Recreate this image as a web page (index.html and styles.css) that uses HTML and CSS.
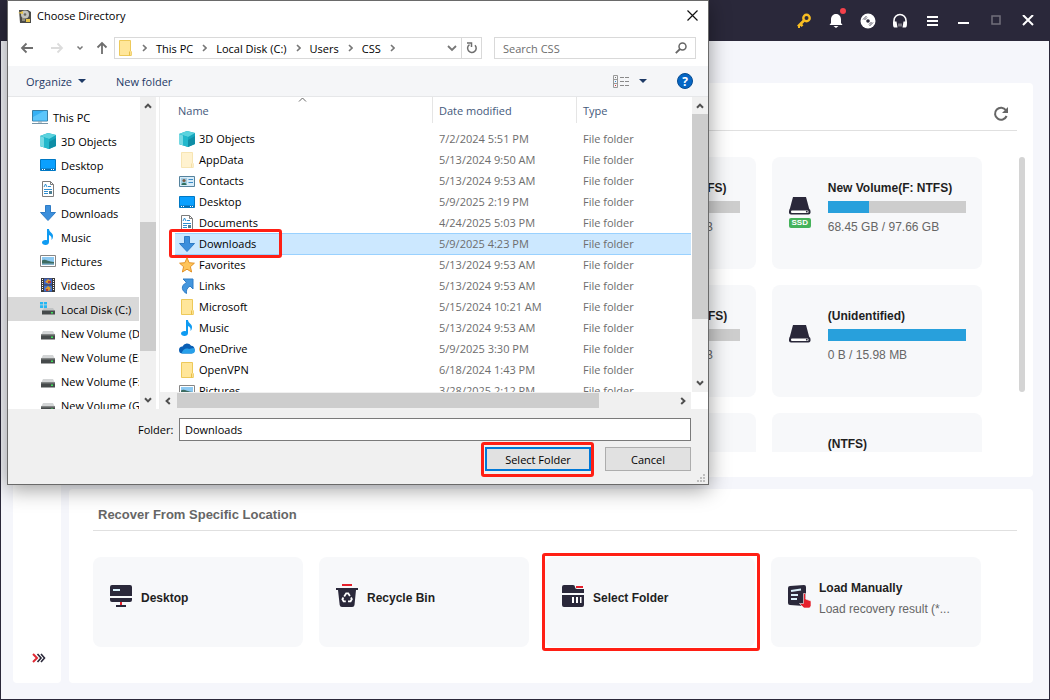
FILE: index.html
```html
<!DOCTYPE html>
<html lang="en">
  <head>
    <meta charset="UTF-8" />
    <meta name="viewport" content="width=device-width, initial-scale=1.0" />
    <title>Data Recovery</title>
    <link rel="stylesheet" href="styles.css">
  </head>
  <body>
    <!-- shared icons -->
    <svg class="sprite" aria-hidden="true">
      <symbol id="i-chevron" viewBox="0 0 5 8"><path d="M1 1l3 3-3 3" fill="none" stroke="#777" stroke-width="1.6"/></symbol>
      <symbol id="i-arrow" viewBox="0 0 8 8"><path d="M1 5.8L4 2.600l3 3.200" fill="none" stroke="#505050" stroke-width="2"/></symbol>
      <symbol id="i-pc" viewBox="0 0 16 16"><path d="M.5 1.500h15v10.500h-15z" fill="#35b1f5" stroke="#3b7fa5"/><path d="M1 8L12 2h3v9.500H1z" fill="#5cc6fb"/><path d="M6 12.500h4v1H6z" fill="#8aa2b1"/><path d="M0 14h16v1H0z" fill="#7593a6"/></symbol>
      <symbol id="i-3d" viewBox="0 0 16 16"><path d="M0 3l8-3 8 2v11l-7 3-9-3z" fill="#17a6bd"/><path d="M0 3l8-3 8 2-7 4z" fill="#5bd3de"/><path d="M0 3l9 3v10l-9-3z" fill="#22b8cc"/><path d="M0 3l4 1.500v10L0 13z" fill="#75d9e3"/><path d="M9 9l7-4v8l-7 3z" fill="#0f8ea6"/></symbol>
      <symbol id="i-desktop" viewBox="0 0 16 16"><path d="M.5 2.500h15v11H.5z" fill="#0aa0ff" stroke="#0078c4"/><path d="M1 11.500h14v1.500H1z" fill="#0b6cae"/><path d="M2 12h1v1H2zM4 12h1v1H4zM11 12h1v1h-1zM13 12h1v1h-1z" fill="#fff"/></symbol>
      <symbol id="i-doc" viewBox="0 0 16 16"><path d="M2.500.5h8l3 3v12h-11z" fill="#fff" stroke="#7c7c7c"/><path d="M10.500.5v3h3" fill="none" stroke="#7c7c7c"/><path d="M4 6l1.500-3L7 6M8 5.500h3M4 8.500h8M4 10.500h4M4 12.500h4" fill="none" stroke="#2f8fd2"/><path d="M9 10h3v3H9z" fill="#4d7f93"/></symbol>
      <symbol id="i-down" viewBox="0 0 16 16"><path d="M5.500.5h5v7h5L8 15.500.5 7.500h5z" fill="#3c8fdc" stroke="#2f7cc6"/></symbol>
      <symbol id="i-music" viewBox="0 0 16 16"><path d="M7 0h2c0 3 4 4 4 7 0 2-.6 3-1.500 4 .5-3-.5-4-2.500-5v7c0 2-1.500 3-3.500 3S2 15 2 13.500 3.500 11 5.500 11c.6 0 1 .1 1.500.3z" fill="#0f9bf2"/></symbol>
      <symbol id="i-pic" viewBox="0 0 16 16"><path d="M.5 2.500h15v11H.5z" fill="#fff" stroke="#868686"/><path d="M2 4h12v8H2z" fill="#8cc9f2"/><path d="M2 7.500c3-2 5 1 12 1.500v3H2z" fill="#3d6c62"/><path d="M2 10.500h12V12H2z" fill="#86b4cd"/></symbol>
      <symbol id="i-video" viewBox="0 0 16 16"><path d="M1 1h14v14H1z" fill="#3b3b3b"/><path d="M4 1.500h8v6H4z" fill="#4165c7"/><path d="M4 8.500h8v6H4z" fill="#3f73d2"/><path d="M5 5l3-3 3 2-2 3zM5 12l3-3 3 2-2 3z" fill="#d99b2c"/><path d="M8 4h3v2H8zM6 12h2v2H6z" fill="#b83a32"/><path d="M2.500 2v12M13.500 2v12" stroke="#fff" stroke-dasharray="1 1"/></symbol>
      <symbol id="i-drive" viewBox="0 0 16 16"><path d="M3 6h10l2 4H1z" fill="#d3d5d6"/><path d="M1 9.500h14v5H1z" fill="#464a4b"/><path d="M1 9.500h14v1H1z" fill="#797c7d"/><path d="M11 11.500h2V13h-2z" fill="#3ee05b"/></symbol>
      <symbol id="i-sysdrive" viewBox="0 0 16 16"><path d="M0 1h3v2.500H0zM3.800 1H7v2.500H3.800zM0 4.300h3V7H0zM3.800 4.300H7V7H3.800z" fill="#25b7f3"/><path d="M4 7h9l2 3H2z" fill="#c0c3c4"/><path d="M2 9.500h13v4H2z" fill="#464a4b"/><path d="M11 11h2v1.500h-2z" fill="#3ee05b"/></symbol>
      <symbol id="i-folder" viewBox="0 0 16 16"><path d="M2.500.5h11v10.500l.8.500v4H2.500z" fill="#ffe69a" stroke="#edc95a"/><path d="M12.500 11.500v4" stroke="#e8bf48"/></symbol>
      <symbol id="i-folder-light" viewBox="0 0 16 16"><path d="M2.500.5h11v10.500l.8.500v4H2.500z" fill="#fff2cf" stroke="#f7e5b3"/><path d="M12.500 11.500v4" stroke="#f3dfa6"/></symbol>
      <symbol id="i-contacts" viewBox="0 0 16 16"><path d="M.5 3.500h15v10H.5z" fill="#d7ecf9" stroke="#55829d"/><path d="M2 5h6v7H2z" fill="#a3cde3"/><circle cx="5" cy="7.500" r="1.600" fill="#7e5b44"/><path d="M2.500 12c0-3 5-3 5 0z" fill="#2d6e5d"/><path d="M9.500 6.500H14M9.500 9.500H14" stroke="#3d8cc7"/></symbol>
      <symbol id="i-star" viewBox="0 0 16 16"><path d="M8 .8l2.100 4.900 5.300.5-4 3.500 1.200 5.300L8 12.200 3.400 15l1.200-5.300-4-3.500 5.300-.5z" fill="#ffc55a" stroke="#e39227"/></symbol>
      <symbol id="i-link" viewBox="0 0 16 16"><path d="M4 1h10v10l-3-3c-3 2-4 4-3.500 7.500C3 13 1 8 7.500 4.500z" fill="#4596dd" stroke="#2f7cc6"/></symbol>
      <symbol id="i-cloud" viewBox="0 0 16 16"><path d="M3.500 12.500a3.500 3.500 0 010-7 4.800 4.800 0 018.600-.7 3.900 3.900 0 01.4 7.700z" fill="#0a5fb5"/><path d="M2.500 12.500c1-4 4.500-6 7.500-4.500l4.500-1c2.500 2 1.500 5.500-1.500 5.500z" fill="#27a0ea"/></symbol>
      <symbol id="i-disk" viewBox="0 0 24 20"><path d="M5 1h13l3.500 13h-20z" fill="#2a283a"/><rect x="1" y="13" width="21.500" height="5.500" rx="2" fill="#2a283a"/><rect x="3" y="14.500" width="17.500" height="2.500" rx="1" fill="#fff"/><circle cx="18.800" cy="15.700" r=".9" fill="#2a283a"/></symbol>
    </svg>

    <div class="app">
      <header class="titlebar">
        <button class="tb-btn" aria-label="Register"><svg width="16" height="16" viewBox="0 0 16 16"><circle cx="10.500" cy="5" r="3.200" fill="none" stroke="#f8bd22" stroke-width="2.400"/><path d="M8 7.500L2 13.500M4.500 11l2 2.200M2 13.800h2" stroke="#f8bd22" stroke-width="2.600"/></svg></button>
        <button class="tb-btn" aria-label="Notifications"><svg width="16" height="16" viewBox="0 0 16 16"><path d="M8 1c3.300 0 5 2.500 5 5.500V10l1.500 2H1.500L3 10V6.500C3 3.500 4.700 1 8 1zM5.500 13h5L8 15z" fill="#fff"/></svg><span class="dot"></span></button>
        <button class="tb-btn" aria-label="Bootable media"><svg width="16" height="16" viewBox="0 0 16 16"><circle cx="8" cy="8" r="7.500" fill="#fff"/><circle cx="8" cy="8" r="1.800" fill="#2a283a"/><path d="M3 6.500L6.500 3M4.500 7L7 4.500M13 9.500L9.500 13M11.500 9L9 11.500" stroke="#2a283a" stroke-width=".8"/></svg></button>
        <button class="tb-btn" aria-label="Support"><svg width="16" height="16" viewBox="0 0 16 16"><path d="M2 10V7.500a6 6 0 0112 0V10" fill="none" stroke="#fff" stroke-width="1.600"/><path d="M1 8.500h3.500l1 6H3c-2 0-2-2-2-6zM15 8.500h-3.500l-1 6H13c2 0 2-2 2-6z" fill="#fff"/><path d="M6 10.500h4v3H6z" fill="#77757f"/></svg></button>
        <button class="tb-btn" aria-label="Menu"><svg width="12" height="12" viewBox="0 0 12 12"><path d="M1 2h11M1 6h11M1 10h11" stroke="#fff" stroke-width="2"/></svg></button>
        <button class="tb-btn" aria-label="Minimize"><svg width="12" height="12" viewBox="0 0 12 12"><path d="M0 8h11" stroke="#fff" stroke-width="2"/></svg></button>
        <button class="tb-btn" aria-label="Maximize"><svg width="12" height="12" viewBox="0 0 12 12"><path d="M2 1h8v8H2z" fill="none" stroke="#716f7b" stroke-width="1.500"/></svg></button>
        <button class="tb-btn" aria-label="Close"><svg width="12" height="12" viewBox="0 0 12 12"><path d="M1 0l10 10M11 0L1 10" stroke="#fff" stroke-width="2"/></svg></button>
      </header>

      <div class="workspace">
        <nav class="rail">
          <button class="rail-toggle" aria-label="Expand"><svg width="14" height="10" viewBox="0 0 14 10"><path d="M1 1l4 4-4 4" fill="none" stroke="#e02a34" stroke-width="2"/><path d="M5.500 1l3.500 4-3.500 4M9 1l3.500 4L9 9" fill="none" stroke="#2a283a" stroke-width="1.600"/></svg></button>
        </nav>

        <main class="content">
          <section class="panel volumes">
            <div class="panel-head">
              <button class="refresh" aria-label="Refresh"><svg width="16" height="16" viewBox="0 0 16 16"><path d="M13.600 10A6 6 0 1113 4.300" fill="none" stroke="#666" stroke-width="2"/><path d="M15 1v6H9z" fill="#666"/></svg></button>
            </div>
            <div class="volume-wrap">
              <div class="volume-grid">
                <div class="tile volume third">
                  <div class="volume-icon"><svg width="24" height="20"><use href="#i-disk"/></svg></div>
                  <div class="volume-info"><strong>New Volume(E: NTFS)</strong><div class="bar"></div><span>61.20 GB / 97.66 GB</span></div>
                </div>
                <div class="tile volume">
                  <div class="volume-icon"><svg width="24" height="20"><use href="#i-disk"/></svg><span class="badge">SSD</span></div>
                  <div class="volume-info"><strong>New Volume(F: NTFS)</strong><div class="bar"><div class="fill" style="width: 30%"></div></div><span>68.45 GB / 97.66 GB</span></div>
                </div>
                <div class="tile volume third">
                  <div class="volume-icon"><svg width="24" height="20"><use href="#i-disk"/></svg></div>
                  <div class="volume-info"><strong>New Volume(H: NTFS)</strong><div class="bar"></div><span>50.32 GB / 97.66 GB</span></div>
                </div>
                <div class="tile volume">
                  <div class="volume-icon"><svg width="24" height="20"><use href="#i-disk"/></svg></div>
                  <div class="volume-info"><strong>(Unidentified)</strong><div class="bar"><div class="fill" style="width: 100%"></div></div><span>0 B / 15.98 MB</span></div>
                </div>
                <div class="tile volume third"></div>
                <div class="tile volume">
                  <div class="volume-icon"></div>
                  <div class="volume-info"><strong>(NTFS)</strong></div>
                </div>
              </div>
              <div class="slim-scroll"><div class="slim-thumb"></div></div>
            </div>
          </section>

          <section class="panel locations">
            <div class="panel-head"><h2>Recover From Specific Location</h2></div>
            <div class="location-grid">
              <button class="tile location">
                <svg width="24" height="24" viewBox="0 0 24 24"><path d="M3 1h18q2 0 2 2v9H1V3q0-2 2-2zM1 14h22v2q0 2-2 2H3q-2 0-2-2z" fill="#2a283a"/><path d="M4 5h7v2H4z" fill="#d9f0fa"/><path d="M11 18h2v3h-2z" fill="#e5202c"/><path d="M7 21h10v2H7z" fill="#2a283a"/></svg>
                <span class="location-text"><strong>Desktop</strong></span>
              </button>
              <button class="tile location">
                <svg width="24" height="24" viewBox="0 0 24 24"><path d="M7 0h10v2H7z" fill="#e5202c"/><path d="M1 4h22v2h-2l-1.500 15q-.3 2-2.300 2H7q-2 0-2.300-2L3 6H1z" fill="#2a283a"/><path d="M9.200 12.500l2-3.200h2l1.700 2.700M16 13.500l.8 1.700-1.200 2.100h-2.600M10.800 17.300H8.600l-1.200-2.100 1-1.700" fill="none" stroke="#fff" stroke-width="1.800"/></svg>
                <span class="location-text"><strong>Recycle Bin</strong></span>
              </button>
              <button class="tile location">
                <svg width="24" height="24" viewBox="0 0 24 24"><path d="M3 1h9q2 0 2 2t2 2h7v4H1V3q0-2 2-2zM1 11h22v10q0 2-2 2H3q-2 0-2-2z" fill="#2a283a"/><path d="M15 2h7v2h-7z" fill="#e5202c"/><path d="M11 13h2v6h-2zM15 13h2v6h-2zM19 13h1.500v6H19z" fill="#fff"/></svg>
                <span class="location-text"><strong>Select Folder</strong></span>
                <span class="mark"></span>
              </button>
              <button class="tile location">
                <svg width="24" height="24" viewBox="0 0 24 24"><path d="M3 2l14-1q2 0 2 2v17l-2 2-14-1q-2 0-2-2V4q0-2 2-2z" fill="#2a283a"/><path d="M4 7l10-1.500M4 11h7M4 15h6" stroke="#d9f0fa" stroke-width="1.800"/><path d="M16.500 9.500h2V15l5.500 2v5l-1.500 2H17l-4.500-4.500h4z" fill="#e5202c" stroke="#f7f8fa" stroke-width=".6"/></svg>
                <span class="location-text"><strong>Load Manually</strong><span>Load recovery result (*...</span></span>
              </button>
            </div>
          </section>
        </main>
      </div>
    </div>

    <div class="dialog" role="dialog" aria-label="Choose Directory">
      <div class="dialog-title">
        <svg width="14" height="14" viewBox="0 0 14 14"><path d="M1 1h9l3 2v11H2z" fill="#4b4b48"/><circle cx="7" cy="5.500" r="4" fill="#c3c3bd"/><circle cx="7" cy="5.500" r="1.300" fill="#686860"/><path d="M0 4l5-2v3zM8 10h4v3H8z" fill="#e7c44a"/><path d="M4 9h3v3H4z" fill="#8f8c7d"/></svg>
        <span>Choose Directory</span>
        <button class="dialog-close" aria-label="Close dialog"><svg width="11" height="11" viewBox="0 0 11 11"><path d="M.5.5l10 10M10.500.5l-10 10" stroke="#111" stroke-width="1.200"/></svg></button>
      </div>

      <div class="dialog-nav">
        <button aria-label="Back"><svg width="14" height="12" viewBox="0 0 14 12"><path d="M6.500 1.500L2 6l4.500 4.500M2 6h11" fill="none" stroke="#6e6e6e" stroke-width="1.800"/></svg></button>
        <button aria-label="Forward"><svg width="14" height="12" viewBox="0 0 14 12"><path d="M7.500 1.500L12 6l-4.500 4.500M12 6H1" fill="none" stroke="#dcdcdc" stroke-width="1.800"/></svg></button>
        <button class="recent" aria-label="Recent locations"><svg width="8" height="8" viewBox="0 0 8 8"><path d="M1.500 2.500L4 5l2.500-2.500" fill="none" stroke="#777" stroke-width="1.500"/></svg></button>
        <button class="up" aria-label="Up"><svg width="12" height="14" viewBox="0 0 12 14"><path d="M1.500 6.500L6 2l4.500 4.500M6 2v11" fill="none" stroke="#6e6e6e" stroke-width="1.800"/></svg></button>
        <div class="address">
          <svg width="16" height="16"><use href="#i-folder"/></svg>
          <svg width="5" height="8"><use href="#i-chevron"/></svg>
          <a href="#">This PC</a>
          <svg width="5" height="8"><use href="#i-chevron"/></svg>
          <a href="#">Local Disk (C:)</a>
          <svg width="5" height="8"><use href="#i-chevron"/></svg>
          <a href="#">Users</a>
          <svg width="5" height="8"><use href="#i-chevron"/></svg>
          <a href="#">CSS</a>
          <svg width="5" height="8"><use href="#i-chevron"/></svg>
          <button class="address-drop" aria-label="Previous locations"><svg width="10" height="8" viewBox="0 0 10 8"><path d="M1 2l4 4 4-4" fill="none" stroke="#777" stroke-width="1.800"/></svg></button>
          <button class="address-refresh" aria-label="Refresh folder"><svg width="12" height="12" viewBox="0 0 12 12"><path d="M3.500 2.600a4.300 4.300 0 105.500.6" fill="none" stroke="#6e6e6e" stroke-width="1.500"/><path d="M1 1h4.500v4" fill="none" stroke="#6e6e6e" stroke-width="1.500"/></svg></button>
        </div>
        <div class="search">
          <input type="text" placeholder="Search CSS" aria-label="Search CSS">
          <svg width="12" height="12" viewBox="0 0 12 12"><circle cx="7.500" cy="4.500" r="3.500" fill="none" stroke="#666" stroke-width="1.500"/><path d="M5 7L.8 11.200" stroke="#666" stroke-width="1.800"/></svg>
        </div>
      </div>

      <div class="toolbar">
        <button>Organize <span class="caret"></span></button>
        <button>New folder</button>
        <button class="view" aria-label="Change view"><svg width="17" height="13" viewBox="0 0 17 13"><path d="M.5.5h4v12h-4zM.5 4.500h4M.5 8.500h4" fill="none" stroke="#999"/><path d="M2 2h1v1H2z" fill="#777"/><path d="M2 6h1v1H2z" fill="#2f8fe0"/><path d="M2 10h1v1H2z" fill="#d33"/><path d="M7 2.500h4M12 2.500h4M7 6.500h4M12 6.500h4M7 10.500h4M12 10.500h4" stroke="#8a8a8a"/></svg><span class="caret"></span></button>
        <button class="help" aria-label="Help">?</button>
      </div>

      <div class="dialog-body">
        <nav class="tree">
          <ul>
            <li class="root"><a href="#"><svg width="16" height="16"><use href="#i-pc"/></svg>This PC</a></li>
            <li><a href="#"><svg width="16" height="16"><use href="#i-3d"/></svg>3D Objects</a></li>
            <li><a href="#"><svg width="16" height="16"><use href="#i-desktop"/></svg>Desktop</a></li>
            <li><a href="#"><svg width="16" height="16"><use href="#i-doc"/></svg>Documents</a></li>
            <li><a href="#"><svg width="16" height="16"><use href="#i-down"/></svg>Downloads</a></li>
            <li><a href="#"><svg width="16" height="16"><use href="#i-music"/></svg>Music</a></li>
            <li><a href="#"><svg width="16" height="16"><use href="#i-pic"/></svg>Pictures</a></li>
            <li><a href="#"><svg width="16" height="16"><use href="#i-video"/></svg>Videos</a></li>
            <li class="current"><a href="#"><svg width="16" height="16"><use href="#i-sysdrive"/></svg>Local Disk (C:)</a></li>
            <li><a href="#"><svg width="16" height="16"><use href="#i-drive"/></svg>New Volume (D:)</a></li>
            <li><a href="#"><svg width="16" height="16"><use href="#i-drive"/></svg>New Volume (E:)</a></li>
            <li><a href="#"><svg width="16" height="16"><use href="#i-drive"/></svg>New Volume (F:)</a></li>
            <li><a href="#"><svg width="16" height="16"><use href="#i-drive"/></svg>New Volume (G:)</a></li>
          </ul>
          <div class="scroll-v tree-scroll">
            <svg width="8" height="8"><use href="#i-arrow"/></svg>
            <div class="track"><div class="thumb"></div></div>
            <svg class="flip" width="8" height="8"><use href="#i-arrow"/></svg>
          </div>
        </nav>

        <div class="files">
          <div class="files-top">
            <div class="files-list">
              <table>
                <colgroup><col><col class="col-date"><col class="col-type"></colgroup>
                <thead>
                  <tr>
                    <th>Name<svg class="sort" width="9" height="5" viewBox="0 0 9 5"><path d="M1 4.500L4.500 1 8 4.500" fill="none" stroke="#666"/></svg></th>
                    <th>Date modified</th>
                    <th>Type</th>
                  </tr>
                </thead>
                <tbody>
                  <tr><td><div class="name"><svg width="16" height="16"><use href="#i-3d"/></svg>3D Objects</div></td><td>7/2/2024 5:51 PM</td><td>File folder</td></tr>
                  <tr><td><div class="name"><svg width="16" height="16"><use href="#i-folder-light"/></svg>AppData</div></td><td>5/13/2024 9:50 AM</td><td>File folder</td></tr>
                  <tr><td><div class="name"><svg width="16" height="16"><use href="#i-contacts"/></svg>Contacts</div></td><td>5/13/2024 9:53 AM</td><td>File folder</td></tr>
                  <tr><td><div class="name"><svg width="16" height="16"><use href="#i-desktop"/></svg>Desktop</div></td><td>5/9/2025 2:19 PM</td><td>File folder</td></tr>
                  <tr><td><div class="name"><svg width="16" height="16"><use href="#i-doc"/></svg>Documents</div></td><td>4/24/2025 5:03 PM</td><td>File folder</td></tr>
                  <tr class="selected"><td><div class="name"><svg width="16" height="16"><use href="#i-down"/></svg>Downloads<span class="mark"></span></div></td><td>5/9/2025 4:23 PM</td><td>File folder</td></tr>
                  <tr><td><div class="name"><svg width="16" height="16"><use href="#i-star"/></svg>Favorites</div></td><td>5/13/2024 9:53 AM</td><td>File folder</td></tr>
                  <tr><td><div class="name"><svg width="16" height="16"><use href="#i-link"/></svg>Links</div></td><td>5/13/2024 9:53 AM</td><td>File folder</td></tr>
                  <tr><td><div class="name"><svg width="16" height="16"><use href="#i-folder"/></svg>Microsoft</div></td><td>5/15/2024 10:21 AM</td><td>File folder</td></tr>
                  <tr><td><div class="name"><svg width="16" height="16"><use href="#i-music"/></svg>Music</div></td><td>5/13/2024 9:53 AM</td><td>File folder</td></tr>
                  <tr><td><div class="name"><svg width="16" height="16"><use href="#i-cloud"/></svg>OneDrive</div></td><td>5/9/2025 3:30 PM</td><td>File folder</td></tr>
                  <tr><td><div class="name"><svg width="16" height="16"><use href="#i-folder"/></svg>OpenVPN</div></td><td>6/18/2024 1:43 PM</td><td>File folder</td></tr>
                  <tr><td><div class="name"><svg width="16" height="16"><use href="#i-pic"/></svg>Pictures</div></td><td>3/28/2025 2:12 PM</td><td>File folder</td></tr>
                </tbody>
              </table>
            </div>
            <div class="scroll-v files-scroll">
              <svg width="8" height="8"><use href="#i-arrow"/></svg>
              <div class="track"><div class="thumb"></div></div>
              <svg class="flip" width="8" height="8"><use href="#i-arrow"/></svg>
            </div>
          </div>
          <div class="scroll-h">
            <svg class="left" width="8" height="8"><use href="#i-arrow"/></svg>
            <div class="track"><div class="thumb"></div></div>
            <svg class="right" width="8" height="8"><use href="#i-arrow"/></svg>
          </div>
        </div>
      </div>

      <div class="dialog-footer">
        <div class="folder-row">
          <label for="folder">Folder:</label>
          <input type="text" id="folder" value="Downloads">
        </div>
        <div class="actions">
          <button class="primary">Select Folder<span class="mark"></span></button>
          <button class="cancel">Cancel</button>
        </div>
        <svg class="grip" width="8" height="8" viewBox="0 0 8 8"><path d="M6 0h2v2H6zM3 3h2v2H3zM6 3h2v2H6zM0 6h2v2H0zM3 6h2v2H3zM6 6h2v2H6z" fill="#bfbfbf"/></svg>
      </div>
    </div>
  </body>
</html>
```

FILE: styles.css
```css
* {
  box-sizing: border-box;
}

body {
  margin: 0;
  position: relative;
  font-family: "Liberation Sans", Arial, sans-serif;
  font-size: 12px;
  color: #1f1f1f;
}

button {
  padding: 0;
  border: none;
  background: none;
  font: inherit;
  color: inherit;
  cursor: pointer;
}

svg {
  display: block;
  flex-shrink: 0;
}

a {
  color: inherit;
  text-decoration: none;
}

.sprite {
  position: absolute;
  width: 0;
  height: 0;
}

/* main window */
.app {
  display: flex;
  flex-direction: column;
  min-height: 100vh;
  background-color: #f5f6fb;
  border: 1px solid #2a283a;
  border-top: none;
}

.titlebar {
  display: flex;
  justify-content: flex-end;
  height: 41px;
  padding-right: 5px;
  background-color: #2a283a;
}

.tb-btn {
  position: relative;
  display: flex;
  align-items: center;
  justify-content: center;
  width: 32px;
}

.dot {
  position: absolute;
  top: 8px;
  right: 6px;
  width: 6px;
  height: 6px;
  border-radius: 50%;
  background-color: #f4414b;
}

.workspace {
  flex: 1;
  display: flex;
  gap: 8px;
  padding: 42px 16px 16px 12px;
}

.rail {
  display: flex;
  flex-direction: column;
  justify-content: flex-end;
  align-items: center;
  width: 48px;
  padding: 0 0 20px 4px;
  border-radius: 4px;
  background-color: #fff;
}

.content {
  flex: 1;
  display: flex;
  flex-direction: column;
  gap: 12px;
}

.panel {
  display: flex;
  flex-direction: column;
  padding: 0 8px 0 24px;
  border-radius: 4px;
  background-color: #fff;
}

.panel-head {
  display: flex;
  align-items: center;
  margin-right: 8px;
  border-bottom: 1px solid #e0e0e0;
}

.volumes {
  flex: 1;
  padding-bottom: 25px;
}

.volumes .panel-head {
  justify-content: flex-end;
  height: 48px;
  padding: 14px 8px 0 0;
}

.volume-wrap {
  display: flex;
  gap: 37px;
  height: 295px;
  margin-top: 26px;
  overflow: hidden;
}

.volume-grid {
  flex: 1;
  display: grid;
  grid-template-columns: repeat(4, 1fr);
  grid-auto-rows: 112px;
  gap: 16px;
}

.tile {
  border-radius: 8px;
  background-color: #f7f8fa;
}

.third {
  grid-column: 3;
}

.volume {
  display: flex;
  gap: 16px;
  padding: 24px 16px 0;
}

.volume-icon {
  display: flex;
  flex-direction: column;
  align-items: center;
  gap: 2px;
  width: 24px;
  padding-top: 15px;
}

.badge {
  padding: 0 3px;
  border-radius: 2px;
  background-color: #45b25a;
  color: #fff;
  font-size: 8px;
  font-weight: bold;
  line-height: 10px;
}

.volume-info {
  flex: 1;
}

.volume-info strong,
.volume-info span {
  display: block;
  line-height: 14px;
  white-space: nowrap;
}

.volume-info span {
  color: #666;
}

.bar {
  height: 12px;
  margin: 6px 0 7px;
  background-color: #cdcdcd;
}

.fill {
  height: 100%;
  background-color: #28a0dc;
}

.slim-scroll {
  width: 6px;
}

.slim-thumb {
  height: 235px;
  border-radius: 3px;
  background-color: #d4d4d4;
}

.locations {
  padding-bottom: 36px;
}

.locations .panel-head {
  height: 42px;
  padding: 10px 0 0 5px;
}

h2 {
  margin: 0;
  font-size: 13px;
  color: #666;
}

.location-grid {
  display: grid;
  grid-template-columns: repeat(4, 1fr);
  gap: 16px;
  margin: 26px 44px 0 0;
}

.location {
  position: relative;
  display: flex;
  align-items: center;
  gap: 8px;
  height: 90px;
  padding: 0 16px 13px;
  text-align: left;
}

.location-text strong,
.location-text span {
  display: block;
  padding-top: 5px;
  line-height: 16px;
  white-space: nowrap;
}

.location-text span {
  color: #666;
}

.mark {
  position: absolute;
  border: 3px solid #ff1f14;
  border-radius: 3px;
}

.location .mark {
  inset: -4px -5px -4px -3px;
}

/* folder picker */
.dialog {
  position: absolute;
  top: 0;
  left: 7px;
  right: 341px;
  border: 1px solid #6a6a6a;
  background-color: #fff;
  box-shadow: 0 4px 20px rgba(0, 0, 0, 0.4);
  font-family: "Open Sans", "Noto Sans", sans-serif;
  font-size: 11px;
  color: #000;
}

.dialog-title {
  display: flex;
  align-items: center;
  gap: 5px;
  height: 29px;
  padding: 0 10px 0 10px;
}

.dialog-close {
  margin-left: auto;
}

.dialog-nav {
  display: flex;
  align-items: center;
  height: 36px;
  padding: 0 12px;
  gap: 16px;
}

.recent,
.up {
  margin-left: -4px;
}

.address {
  flex: 1;
  display: flex;
  align-items: center;
  gap: 9px;
  height: 22px;
  margin-left: -10px;
  padding-left: 2px;
  border: 1px solid #d9d9d9;
  white-space: nowrap;
}

.address-drop {
  margin-left: auto;
  margin-right: -5px;
}

.address-refresh {
  display: flex;
  align-items: center;
  justify-content: center;
  width: 20px;
  height: 20px;
  border-left: 1px solid #d9d9d9;
}

.search {
  display: flex;
  align-items: center;
  width: 202px;
  height: 22px;
  margin-left: -4px;
  padding: 0 8px;
  border: 1px solid #d9d9d9;
}

.search input {
  flex: 1;
  min-width: 0;
  padding: 0;
  border: none;
  outline: none;
  font: inherit;
}

.search input::placeholder {
  color: #6d6d6d;
}

.toolbar {
  display: flex;
  align-items: center;
  gap: 30px;
  height: 31px;
  padding: 0 15px 0 18px;
  background-color: #f5f6f8;
  border-bottom: 1px solid #e6e7e9;
  color: #1e3a66;
}

.toolbar button {
  display: flex;
  align-items: center;
  gap: 6px;
}

.caret {
  border: 4px solid transparent;
  border-top: 4px solid #1e3a66;
  border-bottom: none;
}

.toolbar .view {
  gap: 9px;
  margin-left: auto;
}

.toolbar .help {
  justify-content: center;
  width: 16px;
  height: 16px;
  border-radius: 50%;
  background-color: #0566c4;
  border: 1px solid #064b91;
  color: #fff;
  font-size: 12px;
  font-weight: bold;
}

.dialog-body {
  display: flex;
  height: 312px;
}

.tree {
  display: flex;
  width: 152px;
  padding-right: 3px;
  border-right: 1px solid #ededed;
}

.tree ul {
  flex: 1;
  min-width: 0;
  margin: 0;
  padding: 8px 1px 0 0;
  list-style: none;
  overflow: hidden;
}

.tree a {
  display: flex;
  align-items: center;
  gap: 5px;
  height: 24px;
  padding-left: 32px;
  white-space: nowrap;
  overflow: hidden;
}

.tree .root a {
  padding-left: 24px;
}

.tree .current {
  background-color: #d9d9d9;
}

.scroll-v {
  display: flex;
  flex-direction: column;
  align-items: center;
  width: 16px;
  padding: 5px 0;
  gap: 4px;
  background-color: #f0f0f0;
}

.flip {
  transform: rotate(180deg);
}

.left {
  transform: rotate(-90deg);
}

.right {
  transform: rotate(90deg);
}

.track {
  flex: 1;
  width: 100%;
}

.thumb {
  background-color: #cdcdcd;
}

.tree-scroll .thumb {
  height: 129px;
  margin-top: 108px;
}

.files-scroll .thumb {
  height: 205px;
}

.files {
  flex: 1;
  min-width: 0;
  display: flex;
  flex-direction: column;
}

.files-top {
  flex: 1;
  min-height: 0;
  display: flex;
}

.files-list {
  flex: 1;
  overflow: hidden;
  padding: 0 1px 0 15px;
}

table {
  width: 100%;
  table-layout: fixed;
  border-collapse: collapse;
}

.col-date {
  width: 144px;
}

.col-type {
  width: 115px;
}

th {
  position: relative;
  height: 31px;
  padding: 0 0 5px 7px;
  font-weight: normal;
  text-align: left;
  color: #44597b;
  background: linear-gradient(#e5e5e5, #e5e5e5) no-repeat left top / 1px 26px;
}

th:first-child {
  padding-left: 3px;
  background: none;
}

.sort {
  position: absolute;
  top: 0;
  left: 48%;
}

td {
  height: 21px;
  padding: 0 0 0 7px;
  color: #6d6d6d;
  line-height: 21px;
  white-space: nowrap;
}

td:first-child {
  padding-left: 4px;
  color: #000;
}

.name {
  position: relative;
  display: inline-flex;
  align-items: center;
  gap: 4px;
  height: 21px;
  vertical-align: top;
}

.name .mark {
  inset: -4px -26px -4px -10px;
}

.selected td {
  background-color: #cce8ff;
  box-shadow: inset 0 1px #99d1ff, 0 1px #99d1ff;
}

.scroll-h {
  display: flex;
  align-items: center;
  gap: 5px;
  height: 17px;
  margin-right: 17px;
  padding: 0 4px;
  background-color: #f0f0f0;
}

.scroll-h .thumb {
  width: 85%;
  height: 15px;
}

.dialog-footer {
  position: relative;
  height: 75px;
  padding: 9px 17px 0;
  background-color: #f0f0f0;
}

.folder-row {
  display: flex;
  align-items: center;
  gap: 5px;
}

.folder-row label {
  width: 36px;
  margin-left: 113px;
}

.folder-row input {
  flex: 1;
  height: 23px;
  padding: 0 5px;
  border: 1px solid #7a7a7a;
  font: inherit;
  color: #000;
}

.actions {
  display: flex;
  justify-content: flex-end;
  gap: 14px;
  margin-top: 6px;
}

.actions button {
  position: relative;
  height: 24px;
  background-color: #e1e1e1;
}

.actions .primary {
  width: 106px;
  border: 2px solid #0078d7;
}

.actions .cancel {
  width: 86px;
  border: 1px solid #adadad;
}

.actions .mark {
  inset: -7px -5px -8px -6px;
}

.grip {
  position: absolute;
  right: 3px;
  bottom: 2px;
}
```
